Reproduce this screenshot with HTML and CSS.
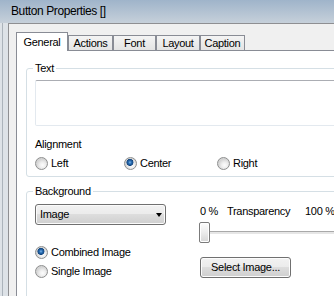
FILE: index.html
```html
<!doctype html>
<html>
<head>
<meta charset="utf-8">
<title>Button Properties</title>
<link rel="stylesheet" href="styles.css">
</head>
<body>
<div class="frame">
	<div class="titlebar">Button Properties []</div>
	<div class="sash">
		<div class="client">
			<div class="tabs">
				<div class="tab active w-general">General</div>
				<div class="tab w-actions">Actions</div>
				<div class="tab w-font">Font</div>
				<div class="tab w-layout">Layout</div>
				<div class="tab w-caption">Caption</div>
			</div>
			<div class="panel">
				<fieldset class="group">
					<legend>Text</legend>
					<div class="textbox"></div>
					<div class="caption">Alignment</div>
					<div class="radios">
						<label class="radio"><span class="dot"></span>Left</label>
						<label class="radio"><span class="dot on"></span>Center</label>
						<label class="radio"><span class="dot"></span>Right</label>
					</div>
				</fieldset>
				<fieldset class="group bg">
					<legend>Background</legend>
					<div class="bg-grid">
						<div class="left">
							<div class="select">Image<span class="arrow"></span></div>
							<div class="choices">
								<label class="radio"><span class="dot on"></span>Combined Image</label>
								<label class="radio"><span class="dot"></span>Single Image</label>
							</div>
						</div>
						<div class="right">
							<div class="scale"><span>0 %</span><span>Transparency</span><span>100 %</span></div>
							<div class="slider"><span class="thumb"></span><span class="track"></span></div>
							<button class="btn">Select Image...</button>
						</div>
					</div>
				</fieldset>
			</div>
		</div>
	</div>
</div>
</body>
</html>
```

FILE: styles.css
```css
* {margin:0; padding:0; box-sizing:border-box;}
body {width:334px; height:296px; overflow:hidden; background:#dde2e7; font:11px/13px "Liberation Sans", Arial, sans-serif; letter-spacing:-0.3px; color:#000;}
.frame {width:334px; height:296px; overflow:hidden;}
.titlebar {height:23px; padding-left:11px; line-height:22px; font-size:12px; letter-spacing:-0.4px; background:linear-gradient(#9fb4ca, #c6d0da);}
.sash {margin-left:2px; border-left:1px solid #abb3bb; padding-left:5px;}
.client {height:273px; border-left:1px solid #8e8f92; border-top:1px solid #8e8f92; background:#f0f0f0; padding:8px 0 0 7px;}

/* tabs */
.tabs {display:flex; align-items:flex-end; height:18px;}
.tab {height:15px; border:1px solid #898c95; border-bottom:0; background:linear-gradient(#f4f4f4, #e4e4e4); text-align:center; line-height:14px;}
.tab.active {height:19px; margin-bottom:-1px; position:relative; z-index:1; background:#fff; line-height:18px;}
.w-general {width:52px;}
.w-actions {width:45px;}
.w-font {width:43px;}
.w-layout {width:44px;}
.w-caption {width:45px;}
.panel {height:246px; overflow:hidden; border-left:1px solid #898c95; border-top:1px solid #898c95; background:#fff; padding:11px 0 0 9px;}

/* group boxes */
.group {border:1px solid #d5dfe5; border-radius:3px; padding:0 8px 6px; min-width:0; margin-right:-12px;}
.group legend {padding:0 2px; margin-left:-2px; line-height:13px;}
.group.bg {margin-top:8px; padding-bottom:20px;}
.textbox {margin-top:5px; height:46px; border:1px solid #e3e9ef; border-top-color:#abadb3; border-radius:2px;}
.caption {margin-top:12px;}
.radios {display:grid; grid-template-columns:89px 93px auto; margin-top:6px;}
.radio {display:flex; align-items:center; gap:3px; line-height:13px;}
.dot {width:13px; height:13px; border-radius:50%; border:1px solid #8e8f8f; background:radial-gradient(circle at 60% 65%, #fdfdfd 0, #eeeeee 3px, #d4d4d4 6px);}
.dot.on {background:radial-gradient(circle at 45% 40%, #7fb6e8 0, #2a6fb5 1.5px, #14467f 3.2px, transparent 3.8px), radial-gradient(circle at 60% 65%, #fdfdfd 0, #eeeeee 3px, #d4d4d4 6px);}

/* background */
.bg-grid {display:grid; grid-template-columns:165px auto;}
.select {margin-top:6px; width:131px; height:21px; border:1px solid #707070; border-radius:3px; background:linear-gradient(#f2f2f2 0, #ebebeb 50%, #dddddd 50%, #cfcfcf 100%); box-shadow:inset 0 0 0 1px #fbfbfb; padding:0 3px 0 4px; display:flex; justify-content:space-between; align-items:center;}
.arrow {width:0; height:0; border-left:3.5px solid transparent; border-right:3.5px solid transparent; border-top:4px solid #000;}
.choices {margin-top:21px; display:grid; row-gap:6px;}
.scale {display:grid; grid-template-columns:27px 78px auto; margin-top:7px; white-space:nowrap;}
.slider {display:flex; align-items:center; margin:4px 0 0 -1px; height:21px;}
.thumb {width:11px; height:21px; border:1px solid #7b7b7b; border-radius:2px; background:linear-gradient(#fdfdfd, #ececec 50%, #d6d6d6); box-shadow:inset 0 0 0 1px #fff;}
.track {flex:1; height:3px; border-top:1px solid #a9a9a9; background:#e6e6e6;}
.btn {display:block; margin-top:14px; width:91px; height:21px; border:1px solid #707070; border-radius:3px; background:linear-gradient(#f2f2f2 0, #ebebeb 50%, #dddddd 50%, #cfcfcf 100%); box-shadow:inset 0 0 0 1px #fcfcfc; font:inherit; letter-spacing:inherit; color:#000;}
```
